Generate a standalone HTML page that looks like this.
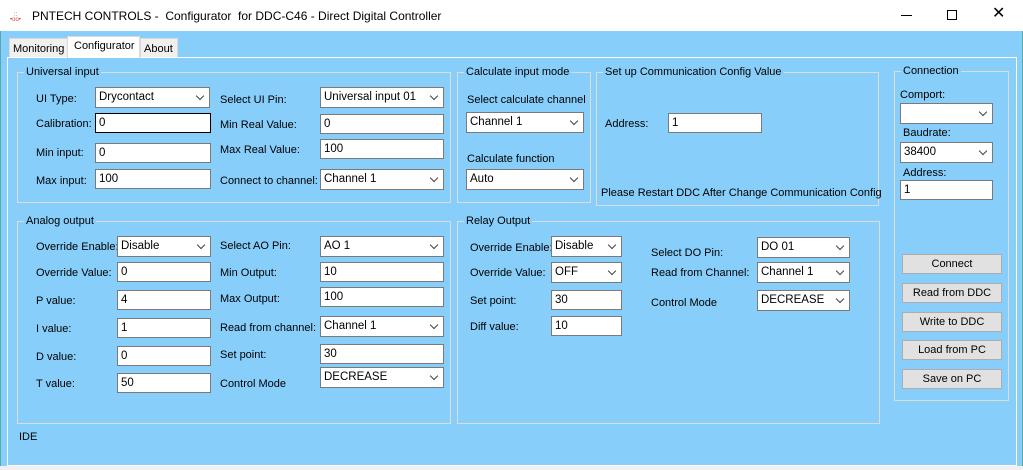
<!DOCTYPE html>
<html><head><meta charset="utf-8"><style>
*{box-sizing:border-box}
body{margin:0;width:1023px;height:470px;overflow:hidden;background:#87cefa;font-family:"Liberation Sans",sans-serif;font-size:11px;color:#000;position:relative}
div,span{position:absolute}
.t{white-space:nowrap;line-height:13px;margin-top:2px}
.tb{background:#fff;border:1px solid #7a7a7a;height:20px;padding:2px 0 0 3px;white-space:nowrap;font-size:11.5px;line-height:14px}
.cb{background:#fff;border:1px solid #7a7a7a;height:21px;padding:2px 0 0 3px;white-space:nowrap;font-size:11.5px;line-height:14px}
.cb:after{content:"";position:absolute;right:6px;top:5px;width:5px;height:5px;border-right:1px solid #444;border-bottom:1px solid #444;transform:rotate(45deg)}
.g{border:1px solid #dcdcdc}
.gl{background:#87cefa;padding:0 2px;top:-8px;left:6px;white-space:nowrap;line-height:14px}
.btn{background:#e1e1e1;border:1px solid #adadad;height:20px;text-align:center;line-height:18px;width:100px;left:902px}
</style></head><body>
<div style="left:0;top:0;width:1023px;height:31px;background:#fff"></div>
<div style="left:10px;top:11px;width:14px;height:10px;font-size:6px;color:#c44;line-height:5px" class="t"><span style="color:#44a;left:4px">::</span><span style="top:5px">•oo•</span></div>
<div class="t" style="left:32px;top:8px;font-size:12px">PNTECH CONTROLS -&nbsp; Configurator&nbsp; for DDC-C46 - Direct Digital Controller</div>
<div style="left:901px;top:15px;width:11px;height:1px;background:#000"></div>
<div style="left:947px;top:10px;width:10px;height:10px;border:1px solid #000"></div>
<div class="t" style="left:992px;top:5px;font-size:16px">✕</div>
<div style="left:0;top:31px;width:1px;height:439px;background:#5aa"></div>
<div style="left:1022px;top:31px;width:1px;height:439px;background:#5aa"></div>
<!-- tabs -->
<div style="left:9px;top:38px;width:59px;height:20px;background:#f0f0f0;border:1px solid #d9d9d9"></div>
<div class="t" style="left:13px;top:41px">Monitoring</div>
<div style="left:140px;top:38px;width:38px;height:20px;background:#f0f0f0;border:1px solid #d9d9d9"></div>
<div class="t" style="left:144px;top:41px">About</div>
<div style="left:7px;top:57px;width:1010px;height:409px;border:1px solid #fff;background:#87cefa"></div>
<div style="left:67px;top:36px;width:73px;height:22px;background:#fff;border:1px solid #d9d9d9;border-bottom:none"></div>
<div class="t" style="left:74px;top:38px">Configurator</div>
<div style="left:0;top:466px;width:1023px;height:4px;background:#f0f0f0"></div>

<!-- Universal input -->
<div class="g" style="left:17px;top:72px;width:434px;height:131px"><span class="gl">Universal input</span></div>
<div class="t" style="left:36px;top:91px">UI Type:</div><div class="cb" style="left:95px;top:87px;width:115px">Drycontact</div>
<div class="t" style="left:36px;top:116px">Calibration:</div><div class="tb" style="left:95px;top:113px;width:116px;border-color:#000">0</div>
<div class="t" style="left:36px;top:145px">Min input:</div><div class="tb" style="left:95px;top:143px;width:116px">0</div>
<div class="t" style="left:36px;top:173px">Max input:</div><div class="tb" style="left:95px;top:169px;width:116px">100</div>
<div class="t" style="left:220px;top:92px">Select UI Pin:</div><div class="cb" style="left:320px;top:87px;width:124px">Universal input 01</div>
<div class="t" style="left:220px;top:117px">Min Real Value:</div><div class="tb" style="left:320px;top:114px;width:124px">0</div>
<div class="t" style="left:220px;top:142px">Max Real Value:</div><div class="tb" style="left:320px;top:139px;width:124px">100</div>
<div class="t" style="left:220px;top:173px">Connect to channel:</div><div class="cb" style="left:320px;top:169px;width:124px">Channel 1</div>

<!-- Calculate -->
<div class="g" style="left:457px;top:72px;width:134px;height:131px"><span class="gl">Calculate input mode</span></div>
<div class="t" style="left:467px;top:92px">Select calculate channel</div><div class="cb" style="left:466px;top:112px;width:118px">Channel 1</div>
<div class="t" style="left:467px;top:151px">Calculate function</div><div class="cb" style="left:466px;top:169px;width:118px">Auto</div>

<!-- Comm -->
<div class="g" style="left:596px;top:72px;width:283px;height:134px"><span class="gl">Set up Communication Config Value</span></div>
<div class="t" style="left:605px;top:116px">Address:</div><div class="tb" style="left:668px;top:113px;width:94px">1</div>
<div class="t" style="left:601px;top:185px">Please Restart DDC After Change Communication Config</div>

<!-- Connection -->
<div class="g" style="left:894px;top:71px;width:115px;height:330px"><span class="gl">Connection</span></div>
<div class="t" style="left:900px;top:87px">Comport:</div><div class="cb" style="left:900px;top:103px;width:93px"></div>
<div class="t" style="left:903px;top:125px">Baudrate:</div><div class="cb" style="left:900px;top:142px;width:93px">38400</div>
<div class="t" style="left:903px;top:165px">Address:</div><div class="tb" style="left:900px;top:180px;width:93px">1</div>
<div class="btn" style="top:254px">Connect</div>
<div class="btn" style="top:283px">Read from DDC</div>
<div class="btn" style="top:312px">Write to DDC</div>
<div class="btn" style="top:340px">Load from PC</div>
<div class="btn" style="top:369px">Save on PC</div>

<!-- Analog -->
<div class="g" style="left:17px;top:221px;width:434px;height:203px"><span class="gl">Analog output</span></div>
<div class="t" style="left:36px;top:239px">Override Enable:</div><div class="cb" style="left:117px;top:236px;width:94px">Disable</div>
<div class="t" style="left:36px;top:265px">Override Value:</div><div class="tb" style="left:117px;top:262px;width:94px">0</div>
<div class="t" style="left:36px;top:293px">P value:</div><div class="tb" style="left:117px;top:290px;width:94px">4</div>
<div class="t" style="left:36px;top:321px">I value:</div><div class="tb" style="left:117px;top:318px;width:94px">1</div>
<div class="t" style="left:36px;top:349px">D value:</div><div class="tb" style="left:117px;top:346px;width:94px">0</div>
<div class="t" style="left:36px;top:376px">T value:</div><div class="tb" style="left:117px;top:373px;width:94px">50</div>
<div class="t" style="left:220px;top:238px">Select AO Pin:</div><div class="cb" style="left:320px;top:236px;width:124px">AO 1</div>
<div class="t" style="left:220px;top:265px">Min Output:</div><div class="tb" style="left:320px;top:262px;width:124px">10</div>
<div class="t" style="left:220px;top:291px">Max Output:</div><div class="tb" style="left:320px;top:287px;width:124px">100</div>
<div class="t" style="left:220px;top:320px">Read from channel:</div><div class="cb" style="left:320px;top:316px;width:124px">Channel 1</div>
<div class="t" style="left:220px;top:347px">Set point:</div><div class="tb" style="left:320px;top:344px;width:124px">30</div>
<div class="t" style="left:220px;top:376px">Control Mode</div><div class="cb" style="left:320px;top:367px;width:124px">DECREASE</div>

<!-- Relay -->
<div class="g" style="left:457px;top:221px;width:423px;height:203px"><span class="gl">Relay Output</span></div>
<div class="t" style="left:470px;top:240px">Override Enable:</div><div class="cb" style="left:551px;top:236px;width:71px">Disable</div>
<div class="t" style="left:470px;top:265px">Override Value:</div><div class="cb" style="left:551px;top:262px;width:71px">OFF</div>
<div class="t" style="left:470px;top:293px">Set point:</div><div class="tb" style="left:551px;top:290px;width:71px">30</div>
<div class="t" style="left:470px;top:319px">Diff value:</div><div class="tb" style="left:551px;top:316px;width:71px">10</div>
<div class="t" style="left:651px;top:245px">Select DO Pin:</div><div class="cb" style="left:757px;top:237px;width:93px">DO 01</div>
<div class="t" style="left:651px;top:265px">Read from Channel:</div><div class="cb" style="left:757px;top:262px;width:93px">Channel 1</div>
<div class="t" style="left:651px;top:295px">Control Mode</div><div class="cb" style="left:757px;top:290px;width:93px">DECREASE</div>

<div class="t" style="left:19px;top:429px">IDE</div>
</body></html>
